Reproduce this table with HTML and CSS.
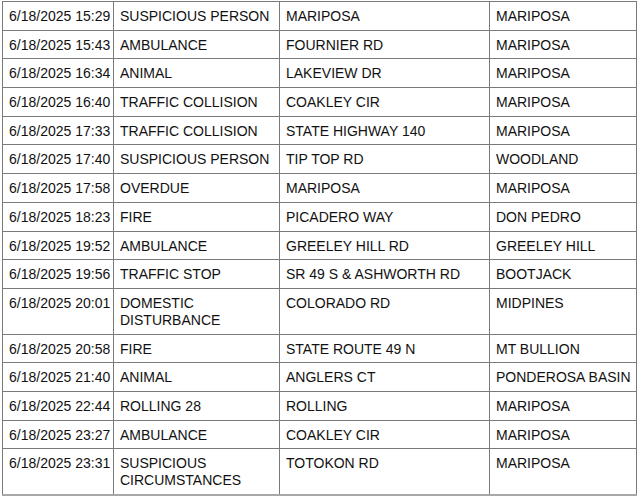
FILE: index.html
```html
<!DOCTYPE html>
<html>
<head>
<meta charset="utf-8">
<link rel="stylesheet" href="styles.css">
</head>
<body>
<table class="log">
<colgroup>
<col class="c1"><col class="c2"><col class="c3"><col class="c4">
</colgroup>
<tbody>
<tr><td>6/18/2025 15:29</td><td>SUSPICIOUS PERSON</td><td>MARIPOSA</td><td>MARIPOSA</td></tr>
<tr><td>6/18/2025 15:43</td><td>AMBULANCE</td><td>FOURNIER RD</td><td>MARIPOSA</td></tr>
<tr><td>6/18/2025 16:34</td><td>ANIMAL</td><td>LAKEVIEW DR</td><td>MARIPOSA</td></tr>
<tr><td>6/18/2025 16:40</td><td>TRAFFIC COLLISION</td><td>COAKLEY CIR</td><td>MARIPOSA</td></tr>
<tr><td>6/18/2025 17:33</td><td>TRAFFIC COLLISION</td><td>STATE HIGHWAY 140</td><td>MARIPOSA</td></tr>
<tr><td>6/18/2025 17:40</td><td>SUSPICIOUS PERSON</td><td>TIP TOP RD</td><td>WOODLAND</td></tr>
<tr><td>6/18/2025 17:58</td><td>OVERDUE</td><td>MARIPOSA</td><td>MARIPOSA</td></tr>
<tr><td>6/18/2025 18:23</td><td>FIRE</td><td>PICADERO WAY</td><td>DON PEDRO</td></tr>
<tr><td>6/18/2025 19:52</td><td>AMBULANCE</td><td>GREELEY HILL RD</td><td>GREELEY HILL</td></tr>
<tr><td>6/18/2025 19:56</td><td>TRAFFIC STOP</td><td>SR 49 S &amp; ASHWORTH RD</td><td>BOOTJACK</td></tr>
<tr><td>6/18/2025 20:01</td><td>DOMESTIC<br>DISTURBANCE</td><td>COLORADO RD</td><td>MIDPINES</td></tr>
<tr><td>6/18/2025 20:58</td><td>FIRE</td><td>STATE ROUTE 49 N</td><td>MT BULLION</td></tr>
<tr><td>6/18/2025 21:40</td><td>ANIMAL</td><td>ANGLERS CT</td><td>PONDEROSA BASIN</td></tr>
<tr><td>6/18/2025 22:44</td><td>ROLLING 28</td><td>ROLLING</td><td>MARIPOSA</td></tr>
<tr><td>6/18/2025 23:27</td><td>AMBULANCE</td><td>COAKLEY CIR</td><td>MARIPOSA</td></tr>
<tr><td>6/18/2025 23:31</td><td>SUSPICIOUS<br>CIRCUMSTANCES</td><td>TOTOKON RD</td><td>MARIPOSA</td></tr>
</tbody>
</table>
</body>
</html>
```
FILE: styles.css
```css
html, body {
  margin: 0;
  padding: 0;
  background: #ffffff;
}
body {
  padding: 1px 0 0 2px;
}
.log {
  border-collapse: collapse;
  table-layout: fixed;
  width: 634px;
  font-family: "Liberation Sans", Arial, sans-serif;
  font-size: 14px;
  line-height: 17px;
  color: #111111;
}
.c1 { width: 111px; }
.c2 { width: 166px; }
.c3 { width: 210px; }
.c4 { width: 147px; }
.log td {
  border: 1px solid #7a7a7a;
  padding: 6px 6px 4.7px 6px;
  vertical-align: top;
  white-space: nowrap;
}
.log tr:last-child td {
  border-bottom: 2px solid #a8a8a8;
}
```
